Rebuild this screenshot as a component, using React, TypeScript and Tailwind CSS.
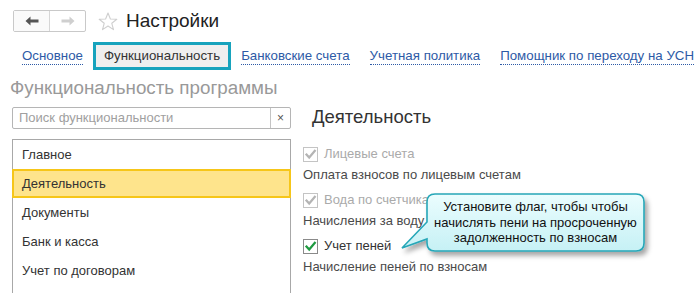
import React from "react";

const font = { fontFamily: '"Liberation Sans", Arial, sans-serif' };

function Check({ enabled }: { enabled: boolean }) {
  return (
    <span
      className={`inline-flex items-center justify-center w-[15px] h-[15px] border bg-white ${
        enabled ? "border-[#8a8a8a]" : "border-[#c4c4c4]"
      }`}
    >
      <svg width="13" height="13" viewBox="0 0 13 13">
        <path
          d="M2.5 6.5 L5.2 9.5 L10.8 2.8"
          fill="none"
          stroke={enabled ? "#1e9a40" : "#b4b4b4"}
          strokeWidth="2.2"
          strokeLinecap="square"
        />
      </svg>
    </span>
  );
}

function TabLink({ children }: { children: React.ReactNode }) {
  return (
    <span className="text-[13.3px] text-[#2d5aa6] border-b border-dotted border-[#2d5aa6] leading-[16px] whitespace-nowrap">
      {children}
    </span>
  );
}

export default function App() {
  const items = ["Главное", "Деятельность", "Документы", "Банк и касса", "Учет по договорам"];
  return (
    <div className="relative w-[700px] h-[293px] overflow-hidden bg-white text-[#333]" style={font}>
      {/* header */}
      <div className="flex items-center pt-[10px] pl-[13px] h-[32px]">
        <div className="flex h-[22px] border border-[#c9c9c9] rounded-[2px] bg-white">
          <div className="w-[36px] flex items-center justify-center border-r border-[#d6d6d6] bg-[#fafafa]">
            <svg width="14" height="10" viewBox="0 0 14 10">
              <path d="M0.5 5 L5.5 0.5 V3.5 H13.5 V6.5 H5.5 V9.5 Z" fill="#555" />
            </svg>
          </div>
          <div className="w-[35px] flex items-center justify-center">
            <svg width="14" height="10" viewBox="0 0 14 10">
              <path d="M13.5 5 L8.5 0.5 V3.5 H0.5 V6.5 H8.5 V9.5 Z" fill="#cfcfcf" />
            </svg>
          </div>
        </div>
        <svg className="ml-[12px]" width="20" height="19" viewBox="0 0 20 19">
          <path
            d="M10 1 L12.4 7 L18.8 7.3 L13.8 11.3 L15.5 17.6 L10 14 L4.5 17.6 L6.2 11.3 L1.2 7.3 L7.6 7 Z"
            fill="none"
            stroke="#cfcfcf"
            strokeWidth="1.1"
            strokeLinejoin="round"
          />
        </svg>
        <span className="ml-[8px] text-[19px] leading-[24px] text-[#222]">Настройки</span>
      </div>

      {/* tabs */}
      <div className="flex items-center mt-[10px] pl-[22px] h-[28px]">
        <TabLink>Основное</TabLink>
        <div className="ml-[10px] h-[28px] px-[8px] flex items-center border-[3px] border-[#17a3bd] bg-[#efefef]">
          <span className="text-[13.3px] text-[#333] whitespace-nowrap">Функциональность</span>
        </div>
        <div className="ml-[10px] flex gap-[20px]">
          <TabLink>Банковские счета</TabLink>
          <TabLink>Учетная политика</TabLink>
          <TabLink>Помощник по переходу на УСН</TabLink>
        </div>
      </div>

      {/* main */}
      <div className="flex mt-[7px]">
        <div className="ml-[12px] w-[279px] flex flex-col">
          <div className="-ml-[2px] h-[22px] text-[18.8px] leading-[22px] text-[#999] whitespace-nowrap">
            Функциональность программы
          </div>
          <div className="mt-[8px] h-[22px] flex border border-[#b5b5b5] rounded-[2px]">
            <div className="flex-1 flex items-center pl-[6px] text-[13px] text-[#a0a0a0]">
              Поиск функциональности
            </div>
            <div className="w-[20px] flex items-center justify-center border-l border-[#c4c4c4] text-[12px] text-[#555]">
              ×
            </div>
          </div>
          <div className="mt-[10px] border-t border-l border-r border-[#a8a8a8] h-[200px]">
            {items.map((it, i) =>
              i === 1 ? (
                <div
                  key={it}
                  className="-mx-[1px] h-[29px] flex items-center pl-[8px] border-2 border-[#f6c619] bg-[#fee48c] text-[13px] text-[#333]"
                >
                  {it}
                </div>
              ) : (
                <div key={it} className="h-[29px] flex items-center pl-[9px] text-[13px] text-[#333]">
                  {it}
                </div>
              )
            )}
          </div>
        </div>

        <div className="ml-[12px] flex flex-col">
          <div className="ml-[9px] mt-[28px] h-[24px] text-[18.5px] leading-[24px] text-[#333]">Деятельность</div>
          <div className="mt-[13px] flex flex-col">
            <div className="h-[24px] flex items-center gap-[6px]">
              <Check enabled={false} />
              <span className="text-[13px] text-[#aaa]">Лицевые счета</span>
            </div>
            <div className="h-[18px] flex items-center text-[13px] text-[#4a4a4a]">Оплата взносов по лицевым счетам</div>
            <div className="mt-[4px] h-[24px] flex items-center gap-[6px]">
              <Check enabled={false} />
              <span className="text-[13px] text-[#aaa]">Вода по счетчикам</span>
            </div>
            <div className="h-[18px] flex items-center text-[13px] text-[#4a4a4a]">Начисления за воду по счетчикам</div>
            <div className="mt-[4px] h-[24px] flex items-center gap-[6px]">
              <Check enabled={true} />
              <span className="text-[13px] text-[#333]">Учет пеней</span>
            </div>
            <div className="h-[18px] flex items-center text-[13px] text-[#4a4a4a]">Начисление пеней по взносам</div>
          </div>
        </div>
      </div>

      {/* callout */}
      <div className="absolute left-[395px] top-[189px] w-[262px] h-[75px]">
        <svg width="262" height="75" viewBox="0 0 262 75" className="absolute inset-0">
          <defs>
            <linearGradient id="cg" x1="0" y1="0" x2="0" y2="1">
              <stop offset="0" stopColor="#ebfdfe" />
              <stop offset="1" stopColor="#c6f1f5" />
            </linearGradient>
            <filter id="sh" x="-10%" y="-10%" width="130%" height="140%">
              <feDropShadow dx="3" dy="4" stdDeviation="2.5" floodColor="#000" floodOpacity="0.35" />
            </filter>
          </defs>
          <path
            d="M40 5 H241 Q249 5 249 13 V54 Q249 62 241 62 H40 Q32 62 32 54 V50 L7 59 L32 33 V13 Q32 5 40 5 Z"
            fill="url(#cg)"
            stroke="#27a7b8"
            strokeWidth="1.6"
            filter="url(#sh)"
          />
        </svg>
        <div className="absolute left-[32px] top-[5px] w-[217px] h-[57px] flex flex-col items-center justify-center text-[13px] leading-[15.5px] text-[#111]">
          <span>Установите флаг, чтобы чтобы</span>
          <span>начислять пени на просроченную</span>
          <span>задолженность по взносам</span>
        </div>
      </div>
    </div>
  );
}
